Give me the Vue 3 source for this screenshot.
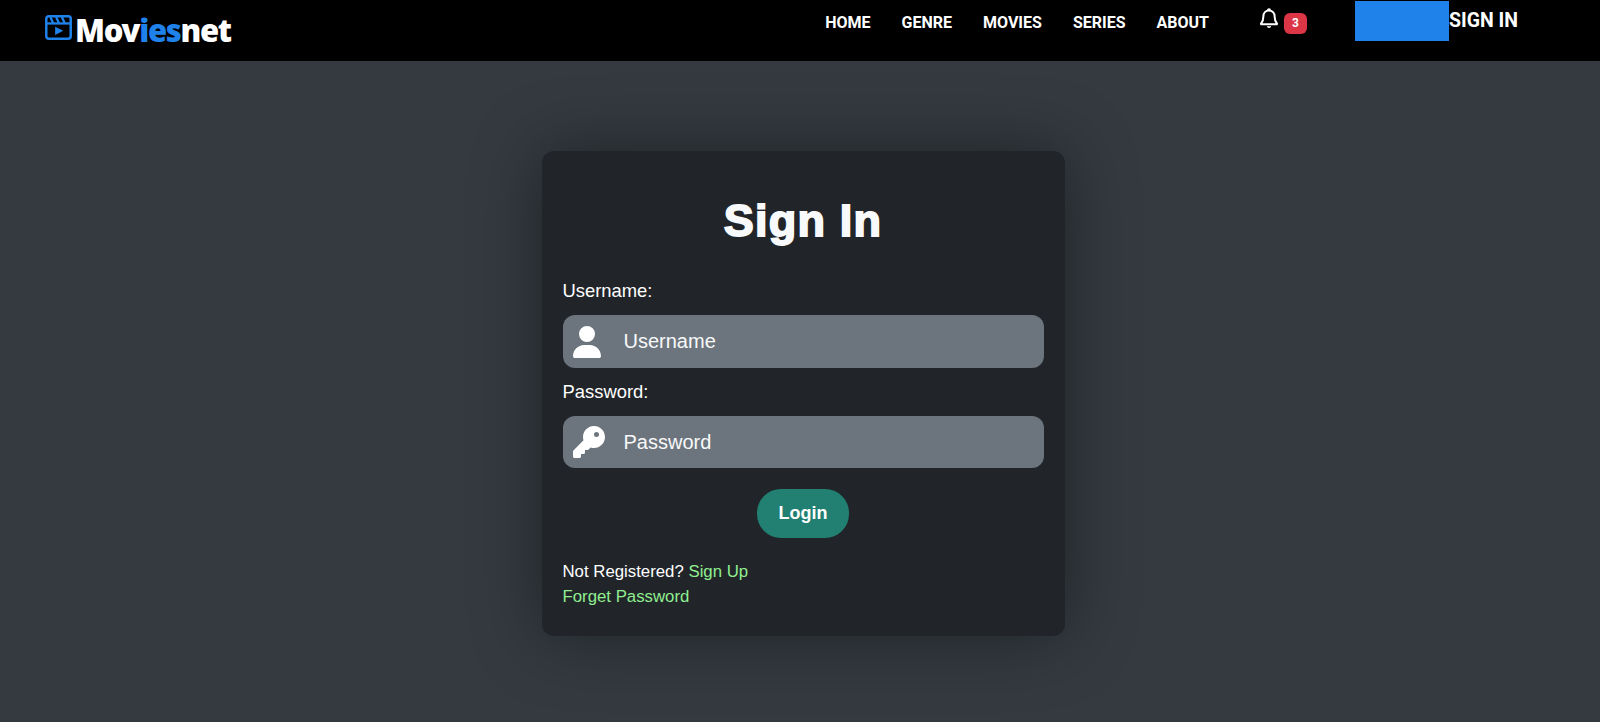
<template>
  <div class="page">
    <header class="topbar">
      <a class="logo" href="#">
        <svg class="logo-icon" viewBox="0 0 28 26" width="27" height="25" fill="none">
          <rect x="1.300" y="1.300" width="25.400" height="23.400" rx="2.500" stroke="#1f82ea" stroke-width="2.600" />
          <path d="M1 8.800h26" stroke="#1f82ea" stroke-width="2.400" />
          <path d="M5.500 2l3 6.500M11.500 2l3 6.500M17.500 2l3 6.500" stroke="#1f82ea" stroke-width="2.400" />
          <path d="M10.500 12.200l8.500 4.300-8.500 4.300z" fill="#1f82ea" />
        </svg>
        <span class="logo-text">Mov<span class="logo-accent">ies</span>net</span>
      </a>

      <nav class="nav">
        <a v-for="item in navItems" :key="item" href="#">{{ item }}</a>
      </nav>

      <div class="notify">
        <svg class="bell" viewBox="0 0 18 21" width="18" height="21" fill="none">
          <path d="M9 2.600c-3.300 0-5.600 2.500-5.600 5.700 0 4.500-1.200 5.800-2.300 7.100-.3.400 0 .9.400.9h15c.4 0 .7-.5.400-.9-1.100-1.300-2.300-2.600-2.300-7.100 0-3.200-2.300-5.700-5.600-5.700z" stroke="#fff" stroke-width="2" stroke-linejoin="round" />
          <path d="M7.800 2.400c0-1.800 2.400-1.800 2.400 0" stroke="#fff" stroke-width="1.600" />
          <path d="M6.800 18.300h4.400c-.3 2.300-4.100 2.300-4.400 0z" fill="#fff" />
        </svg>
        <span class="badge">3</span>
      </div>

      <div class="signin-block">
        <span class="blue-box"></span>
        <a class="signin-link" href="#">SIGN IN</a>
      </div>
    </header>

    <main class="content">
      <form class="card" @submit.prevent>
        <h1 class="card-title">Sign In</h1>

        <label class="field-label" for="username">Username:</label>
        <div class="input-row input-row-first">
          <span class="icon-box">
            <svg viewBox="0 0 448 512" width="28" height="32" fill="#fff">
              <path d="M224 256a128 128 0 1 0 0-256 128 128 0 1 0 0 256zm-45.700 48C79.800 304 0 383.800 0 482.300 0 498.700 13.300 512 29.700 512h388.600c16.400 0 29.700-13.300 29.700-29.700C448 383.800 368.200 304 269.700 304h-91.400z" />
            </svg>
          </span>
          <input id="username" v-model="username" type="text" placeholder="Username" />
        </div>

        <label class="field-label" for="password">Password:</label>
        <div class="input-row">
          <span class="icon-box">
            <svg viewBox="0 0 512 512" width="32" height="32" fill="#fff">
              <path d="M336 352c97.200 0 176-78.800 176-176S433.200 0 336 0 160 78.800 160 176c0 18.700 2.900 36.800 8.300 53.700L7 391c-4.500 4.500-7 10.600-7 17v80c0 13.300 10.700 24 24 24h80c13.300 0 24-10.700 24-24v-40h40c13.300 0 24-10.700 24-24v-40h40c6.400 0 12.500-2.500 17-7l33.300-33.300c16.900 5.400 35 8.300 53.700 8.300zm40-256a40 40 0 1 1 0 80 40 40 0 1 1 0-80z" />
            </svg>
          </span>
          <input id="password" v-model="password" type="password" placeholder="Password" />
        </div>

        <button class="login-btn" type="submit">Login</button>

        <p class="card-foot">Not Registered? <a href="#">Sign Up</a></p>
        <p class="card-foot"><a href="#">Forget Password</a></p>
      </form>
    </main>
  </div>
</template>

<script setup>
import { ref } from "vue";

const navItems = ["HOME", "GENRE", "MOVIES", "SERIES", "ABOUT"];
const username = ref("");
const password = ref("");
</script>

<style>
html,
body {
  margin: 0;
  background: #343a40;
}
</style>

<style scoped>
.page {
  min-height: 722px;
  background: #343a40;
  font-family: "Liberation Sans", Arial, sans-serif;
  color: #fff;
}

a {
  text-decoration: none;
  color: inherit;
}

.topbar {
  display: flex;
  align-items: flex-start;
  height: 61px;
  padding-left: 45px;
  background: #000;
  box-sizing: border-box;
}

.logo {
  display: flex;
  align-items: flex-start;
  gap: 3px;
  margin-top: 15px;
}

.logo-text {
  margin-top: -1px;
  font-family: "Noto Sans", sans-serif;
  font-weight: 900;
  font-size: 31px;
  line-height: 32px;
  letter-spacing: -1.300px;
}

.logo-accent {
  color: #1f82ea;
}

.nav {
  display: flex;
  gap: 31px;
  margin-left: auto;
  margin-top: 12px;
  font-family: Roboto, sans-serif;
  font-weight: 700;
  font-size: 16px;
  line-height: 22px;
}

.notify {
  display: flex;
  align-items: flex-start;
  gap: 6px;
  margin-left: 51px;
  margin-top: 8px;
}

.bell {
  display: block;
}

.badge {
  width: 23px;
  height: 21px;
  margin-top: 5px;
  border-radius: 6px;
  background: #dc3545;
  text-align: center;
  font-family: Roboto, sans-serif;
  font-weight: 700;
  font-size: 12px;
  line-height: 21px;
}

.signin-block {
  display: flex;
  align-items: flex-start;
  width: 163px;
  margin-left: 48px;
  margin-right: 82px;
  margin-top: 1px;
}

.blue-box {
  flex: none;
  width: 94px;
  height: 40px;
  background: #1f82ea;
}

.signin-link {
  flex: none;
  font-family: Roboto, sans-serif;
  font-weight: 700;
  font-size: 19.500px;
  line-height: 40px;
  white-space: nowrap;
}

.content {
  display: flex;
  justify-content: center;
  padding-top: 90px;
}

.card {
  width: 523px;
  height: 485px;
  box-sizing: border-box;
  margin-left: 6px;
  padding: 43px 21px 0;
  border-radius: 12px;
  background: #212529;
  box-shadow: 0 0 70px rgba(0, 0, 0, 0.4);
}

.card-title {
  margin: 0 0 31px;
  text-align: center;
  font-size: 45px;
  line-height: 54px;
  font-weight: 700;
  letter-spacing: 1.200px;
  color: #f8f9fa;
  -webkit-text-stroke: 1.800px #f8f9fa;
}

.field-label {
  display: block;
  margin-bottom: 12px;
  font-size: 18.400px;
  line-height: 24px;
}

.input-row {
  display: flex;
  align-items: center;
  height: 52px;
  margin-bottom: 12px;
  padding-left: 10px;
  border-radius: 12px;
  background: #6c757d;
}

.input-row-first {
  height: 53px;
}

.icon-box {
  display: flex;
  flex: none;
  width: 51px;
}

.input-row input {
  flex: 1;
  min-width: 0;
  padding: 0;
  border: none;
  outline: none;
  background: transparent;
  color: #f8f9fa;
  font-family: inherit;
  font-size: 20px;
}

.input-row input::placeholder {
  color: #f8f9fa;
  opacity: 1;
}

.login-btn {
  display: block;
  width: 92px;
  height: 49px;
  margin: 21px auto 21px;
  border: none;
  border-radius: 24px;
  background: #218071;
  color: #fff;
  font-family: inherit;
  font-weight: 700;
  font-size: 18px;
}

.card-foot {
  margin: 0;
  font-size: 16.800px;
  line-height: 25px;
}

.card-foot a {
  color: #90ee90;
}
</style>
